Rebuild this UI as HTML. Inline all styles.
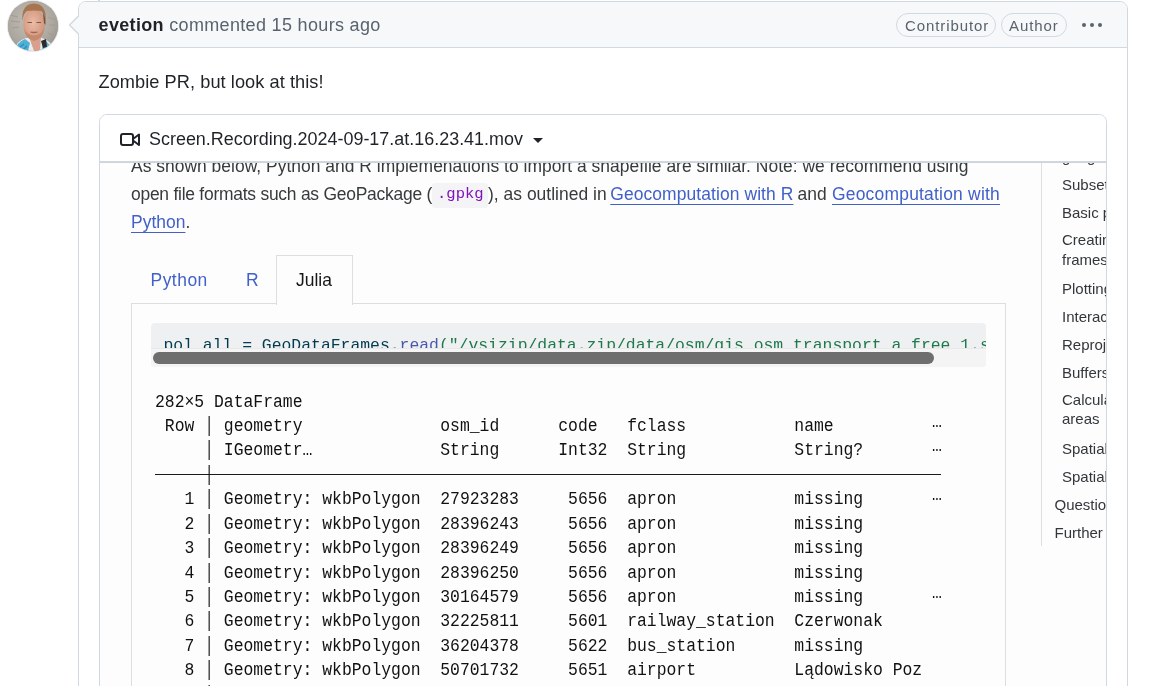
<!DOCTYPE html>
<html><head><meta charset="utf-8">
<style>
*{box-sizing:border-box;margin:0;padding:0}
html,body{width:1164px;height:686px;overflow:hidden;background:#fff;font-family:"Liberation Sans",sans-serif;color:#1f2328}
.abs{position:absolute}
#root{position:absolute;left:0;top:0;width:1164px;height:686px;overflow:hidden;will-change:transform}
#avatar{left:8px;top:1px;width:50px;height:50px;border-radius:50%;overflow:hidden;background:#9c968e;box-shadow:0 0 0 1px rgba(31,35,40,0.12)}
#card{left:78px;top:1px;width:1050px;height:720px;border:1px solid #d1d9e0;border-radius:8px;background:#fff}
#hdr{left:79px;top:2px;width:1048px;height:46px;background:#f6f8fa;border-radius:7px 7px 0 0;border-bottom:1px solid #d1d9e0}
#arrow{left:69px;top:15px;width:20px;height:20px}
.hdrtxt{left:98.6px;top:13px;font-size:18px;line-height:24px;white-space:pre;color:#59636e;letter-spacing:0.33px}
.hdrtxt b{color:#1f2328;font-weight:700}
.pill{top:13px;height:24px;border:1px solid #d1d9e0;border-radius:12px;font-size:15px;line-height:24px;color:#59636e;letter-spacing:0.9px;padding:0 8px}
.dot{width:4.2px;height:4.2px;border-radius:50%;background:#59636e;top:23.3px}
#body1{left:98.5px;top:70px;font-size:18.2px;line-height:24px;white-space:pre;letter-spacing:0.06px}
#video{left:99px;top:114px;width:1008px;height:700px;border:1px solid #d1d9e0;border-radius:8px;background:#fff;overflow:hidden}
#vhdr{left:0;top:0;width:1006px;height:47px;border-bottom:1px solid #d1d9e0;background:#fff}
#frame{left:0;top:0;width:1164px;height:686px;clip-path:inset(162px 58px 0 100px)}
.icode{font-family:"Liberation Mono",monospace;font-size:15px;color:#7d12ba;background:#f6f6f8;padding:3px 6px;margin:0 1px}
.codeline{font-family:"Liberation Mono",monospace;font-size:16.4px;line-height:24px;white-space:pre;color:#003b4f}
.toc{position:absolute;font-size:15px;line-height:28px;white-space:pre;color:#33373b}
.ell{position:relative;top:-4px}

.q{position:absolute;font-size:17.45px;line-height:28px;white-space:pre;color:#373a3c;letter-spacing:0.02px}
.q a{color:#4161c9;text-decoration:underline;text-underline-offset:4px}
.code{font-family:"Liberation Mono",monospace}
.ml{position:absolute;left:155px;font-family:"Liberation Mono",monospace;font-size:16.4px;line-height:24px;white-space:pre;color:#111;transform:scaleY(1.08);transform-origin:0 5.5px}
</style></head><body><div id="root">
<div id="avatar" class="abs">
<svg width="50" height="50" viewBox="0 0 50 50" style="filter:blur(0.7px);display:block">
<defs>
<radialGradient id="bg" cx="0.45" cy="0.4" r="0.75"><stop offset="0" stop-color="#c4c0b8"/><stop offset="0.6" stop-color="#aca79f"/><stop offset="1" stop-color="#8e8982"/></radialGradient>
<radialGradient id="face" cx="0.45" cy="0.45" r="0.65"><stop offset="0" stop-color="#ebbba6"/><stop offset="0.75" stop-color="#d49a82"/><stop offset="1" stop-color="#b97e66"/></radialGradient>
<filter id="bl" x="-10%" y="-10%" width="120%" height="120%"><feGaussianBlur stdDeviation="0.6"/></filter>
</defs>
<rect width="50" height="50" fill="url(#bg)"/>
<g>
<path d="M2 14 l8 2 M3 20 l9 1 M4 27 l7 -1 M40 16 l7 3 M41 24 l6 0 M40 32 l6 2" stroke="#a19c94" stroke-width="1" fill="none"/>
<path d="M6 50 Q8 40 18 37 L34 37 Q44 40 46 50Z" fill="#e8eef0"/>
<path d="M7 50 Q9 41 17 38 L22 42 L20 50Z" fill="#4fb0d6"/>
<path d="M12 46 l4 -3 M15 49 l4 -4" stroke="#2d8fbf" stroke-width="1.5"/>
<path d="M35 39 Q41 41 43 47 L38 50 L34 50Z" fill="#58b3d4"/>
<path d="M21 36 L26 50 L32 50 L33 36Z" fill="#d79f8c"/>
<path d="M33 40 L38 38 L39 46 L35 47Z" fill="#2e2a2c"/>
<ellipse cx="26" cy="23.5" rx="10.8" ry="15.5" fill="url(#face)"/>
<path d="M16 27 Q17 38 26 40 Q35 38 36.5 27 Q34 34 26 34.5 Q18 34 16 27Z" fill="#c48a6e"/>
<path d="M14.5 20 Q13 3 26 2.5 Q39 3 37.5 20 Q36.5 12 33 10 Q26 9 19 10 Q15.5 12 14.5 20Z" fill="#a8754f"/>
<path d="M35 12 Q38 16 37.5 24 L36 22Z" fill="#7a5038"/>
<path d="M19.5 21.5 h4.5 M28.5 21.5 h4.5" stroke="#7d5a4a" stroke-width="1.1"/>
<path d="M22.5 31 Q26 32 29.5 31" stroke="#a8604f" stroke-width="1.3" fill="none"/>
</g>
</svg>
</div>
<div class="abs" style="left:98px;top:0;width:2px;height:1px;background:#d1d9e0"></div>
<div id="card" class="abs"></div>
<div id="hdr" class="abs"></div>
<svg id="arrow" class="abs" width="20" height="20" viewBox="0 0 20 20"><path d="M10 0.5 L0.5 10 L10 19.5" fill="#f6f8fa" stroke="#d1d9e0" stroke-width="1.3"/><rect x="10" y="0" width="10" height="20" fill="#f6f8fa"/></svg>
<div class="abs hdrtxt"><b>evetion</b> commented 15 hours ago</div>
<div class="abs pill" style="left:896px;width:100px">Contributor</div>
<div class="abs pill" style="left:1001px;width:66px;padding-left:7px">Author</div>
<div class="abs dot" style="left:1082px"></div>
<div class="abs dot" style="left:1090px"></div>
<div class="abs dot" style="left:1098px"></div>
<div id="body1" class="abs">Zombie PR, but look at this!</div>

<div id="video" class="abs">
  <div id="vhdr" class="abs"></div>
</div>
<svg class="abs" style="left:120px;top:133px" width="20" height="14" viewBox="0 0 20 14"><rect x="1" y="1" width="12" height="11" rx="2" fill="none" stroke="#1f2328" stroke-width="2"/><path d="M13 6 L19 1.5 V12 L13 7.5" fill="none" stroke="#1f2328" stroke-width="2" stroke-linejoin="round"/></svg>
<div class="abs" style="left:149px;top:127px;font-size:17.95px;line-height:24px;white-space:pre;color:#1f2328">Screen.Recording.2024-09-17.at.16.23.41.mov</div>
<svg class="abs" style="left:533px;top:138px" width="10" height="5" viewBox="0 0 10 5"><path d="M0 0 H10 L5 5Z" fill="#1f2328"/></svg>

<div id="frame" class="abs">
<div class="abs" style="left:0;top:0;width:1164px;height:686px;background:#fdfdfd"></div>
<div class="abs" style="left:100px;top:162px;width:1006px;height:1px;background:#cfd4da;z-index:5"></div>
<div class="q" style="left:131px;top:152px">As shown below, Python and R implemenations to import a shapefile are similar. Note: we recommend using</div>
<div class="q" style="left:131px;top:180px;letter-spacing:-0.24px">open file formats such as GeoPackage (</div>
<div class="abs" style="left:432px;top:183px;width:56px;height:25px;background:#f4f4f6;border-radius:3px"></div>
<div class="q code" style="left:437px;top:180px;font-size:15.5px;color:#7d12ba">.gpkg</div>
<div class="q" style="left:488px;top:180px">), as outlined in </div>
<div class="q" style="left:610.3px;top:180px;letter-spacing:0.09px"><a>Geocomputation with R</a></div>
<div class="q" style="left:797.6px;top:180px">and</div>
<div class="q" style="left:832px;top:180px;letter-spacing:0.22px"><a>Geocomputation with</a></div>
<div class="q" style="left:131px;top:208px"><a>Python</a>.</div>
<div class="abs" style="left:276px;top:255px;width:77px;height:50px;border:1px solid #dddde2;border-bottom:none;background:#fdfdfd"></div>
<div class="abs" style="left:131px;top:303px;width:875px;height:500px;border:1px solid #dddde2;border-top:none"></div>
<div class="abs" style="left:131px;top:303px;width:146px;height:1px;background:#dddde2"></div>
<div class="abs" style="left:352px;top:303px;width:654px;height:1px;background:#dddde2"></div>
<div class="q tab" style="left:150.5px;top:266px;color:#4161c9;letter-spacing:0.5px">Python</div>
<div class="q tab" style="left:246px;top:266px;color:#4161c9">R</div>
<div class="q tab" style="left:296px;top:266px;color:#161616">Julia</div>
<div class="abs" style="left:150.5px;top:323px;width:835.5px;height:43.5px;background:#eff0f2;border-radius:4px;overflow:hidden">
  <div class="abs codeline" style="left:13px;top:11px">pol_all = GeoDataFrames.<span style="color:#4758ab">read</span><span style="color:#20794d">("/vsizip/data.zip/data/osm/gis_osm_transport_a_free_1.shp")</span></div>
  <div class="abs" style="left:0;top:25px;width:837px;height:19px;background:#f4f4f5;border-top:1px solid #e8e9eb"></div>
  <div class="abs" style="left:2px;top:29px;width:781px;height:12px;background:#6e6e6e;border-radius:6px"></div>
</div>
<div id="sep" class="abs" style="left:155px;top:474px;width:786px;height:1.4px;background:#1a1a1a"></div>
<div id="mono">
<div class="ml" style="top:389.64px">282×5 DataFrame</div>
<div class="ml" style="top:414.06px"> Row │ geometry              osm_id      code   fclass           name          <span class="ell">…</span></div>
<div class="ml" style="top:438.48px">     │ IGeometr…             String      Int32  String           String?       <span class="ell">…</span></div>
<div class="ml" style="top:462.90px">     │</div>
<div class="ml" style="top:487.32px">   1 │ Geometry: wkbPolygon  27923283     5656  apron            missing       <span class="ell">…</span></div>
<div class="ml" style="top:511.74px">   2 │ Geometry: wkbPolygon  28396243     5656  apron            missing       </div>
<div class="ml" style="top:536.16px">   3 │ Geometry: wkbPolygon  28396249     5656  apron            missing       </div>
<div class="ml" style="top:560.58px">   4 │ Geometry: wkbPolygon  28396250     5656  apron            missing       </div>
<div class="ml" style="top:585.00px">   5 │ Geometry: wkbPolygon  30164579     5656  apron            missing       <span class="ell">…</span></div>
<div class="ml" style="top:609.42px">   6 │ Geometry: wkbPolygon  32225811     5601  railway_station  Czerwonak     </div>
<div class="ml" style="top:633.84px">   7 │ Geometry: wkbPolygon  36204378     5622  bus_station      missing       </div>
<div class="ml" style="top:658.26px">   8 │ Geometry: wkbPolygon  50701732     5651  airport          Lądowisko Poz </div>
<div class="ml" style="top:682.68px">     │</div>
</div>
<div class="abs" style="left:1041px;top:162px;width:1px;height:384px;background:#dddde2"></div>
<div class="toc" style="left:1062px;top:143px">geographic</div>
<div class="toc" style="left:1062px;top:171px">Subsetting</div>
<div class="toc" style="left:1062px;top:199px">Basic plotting</div>
<div class="toc" style="left:1062px;top:230.3px;line-height:19.4px">Creating<br>frames</div>
<div class="toc" style="left:1062px;top:275px">Plotting</div>
<div class="toc" style="left:1062px;top:303px">Interactive</div>
<div class="toc" style="left:1062px;top:331px">Reprojecting</div>
<div class="toc" style="left:1062px;top:359px">Buffers</div>
<div class="toc" style="left:1062px;top:389.8px;line-height:19.4px">Calculating<br>areas</div>
<div class="toc" style="left:1062px;top:435px">Spatial</div>
<div class="toc" style="left:1062px;top:463px">Spatial</div>
<div class="toc" style="left:1054.5px;top:491px">Questions</div>
<div class="toc" style="left:1054.5px;top:519px">Further</div>
</div>
</div></body></html>
